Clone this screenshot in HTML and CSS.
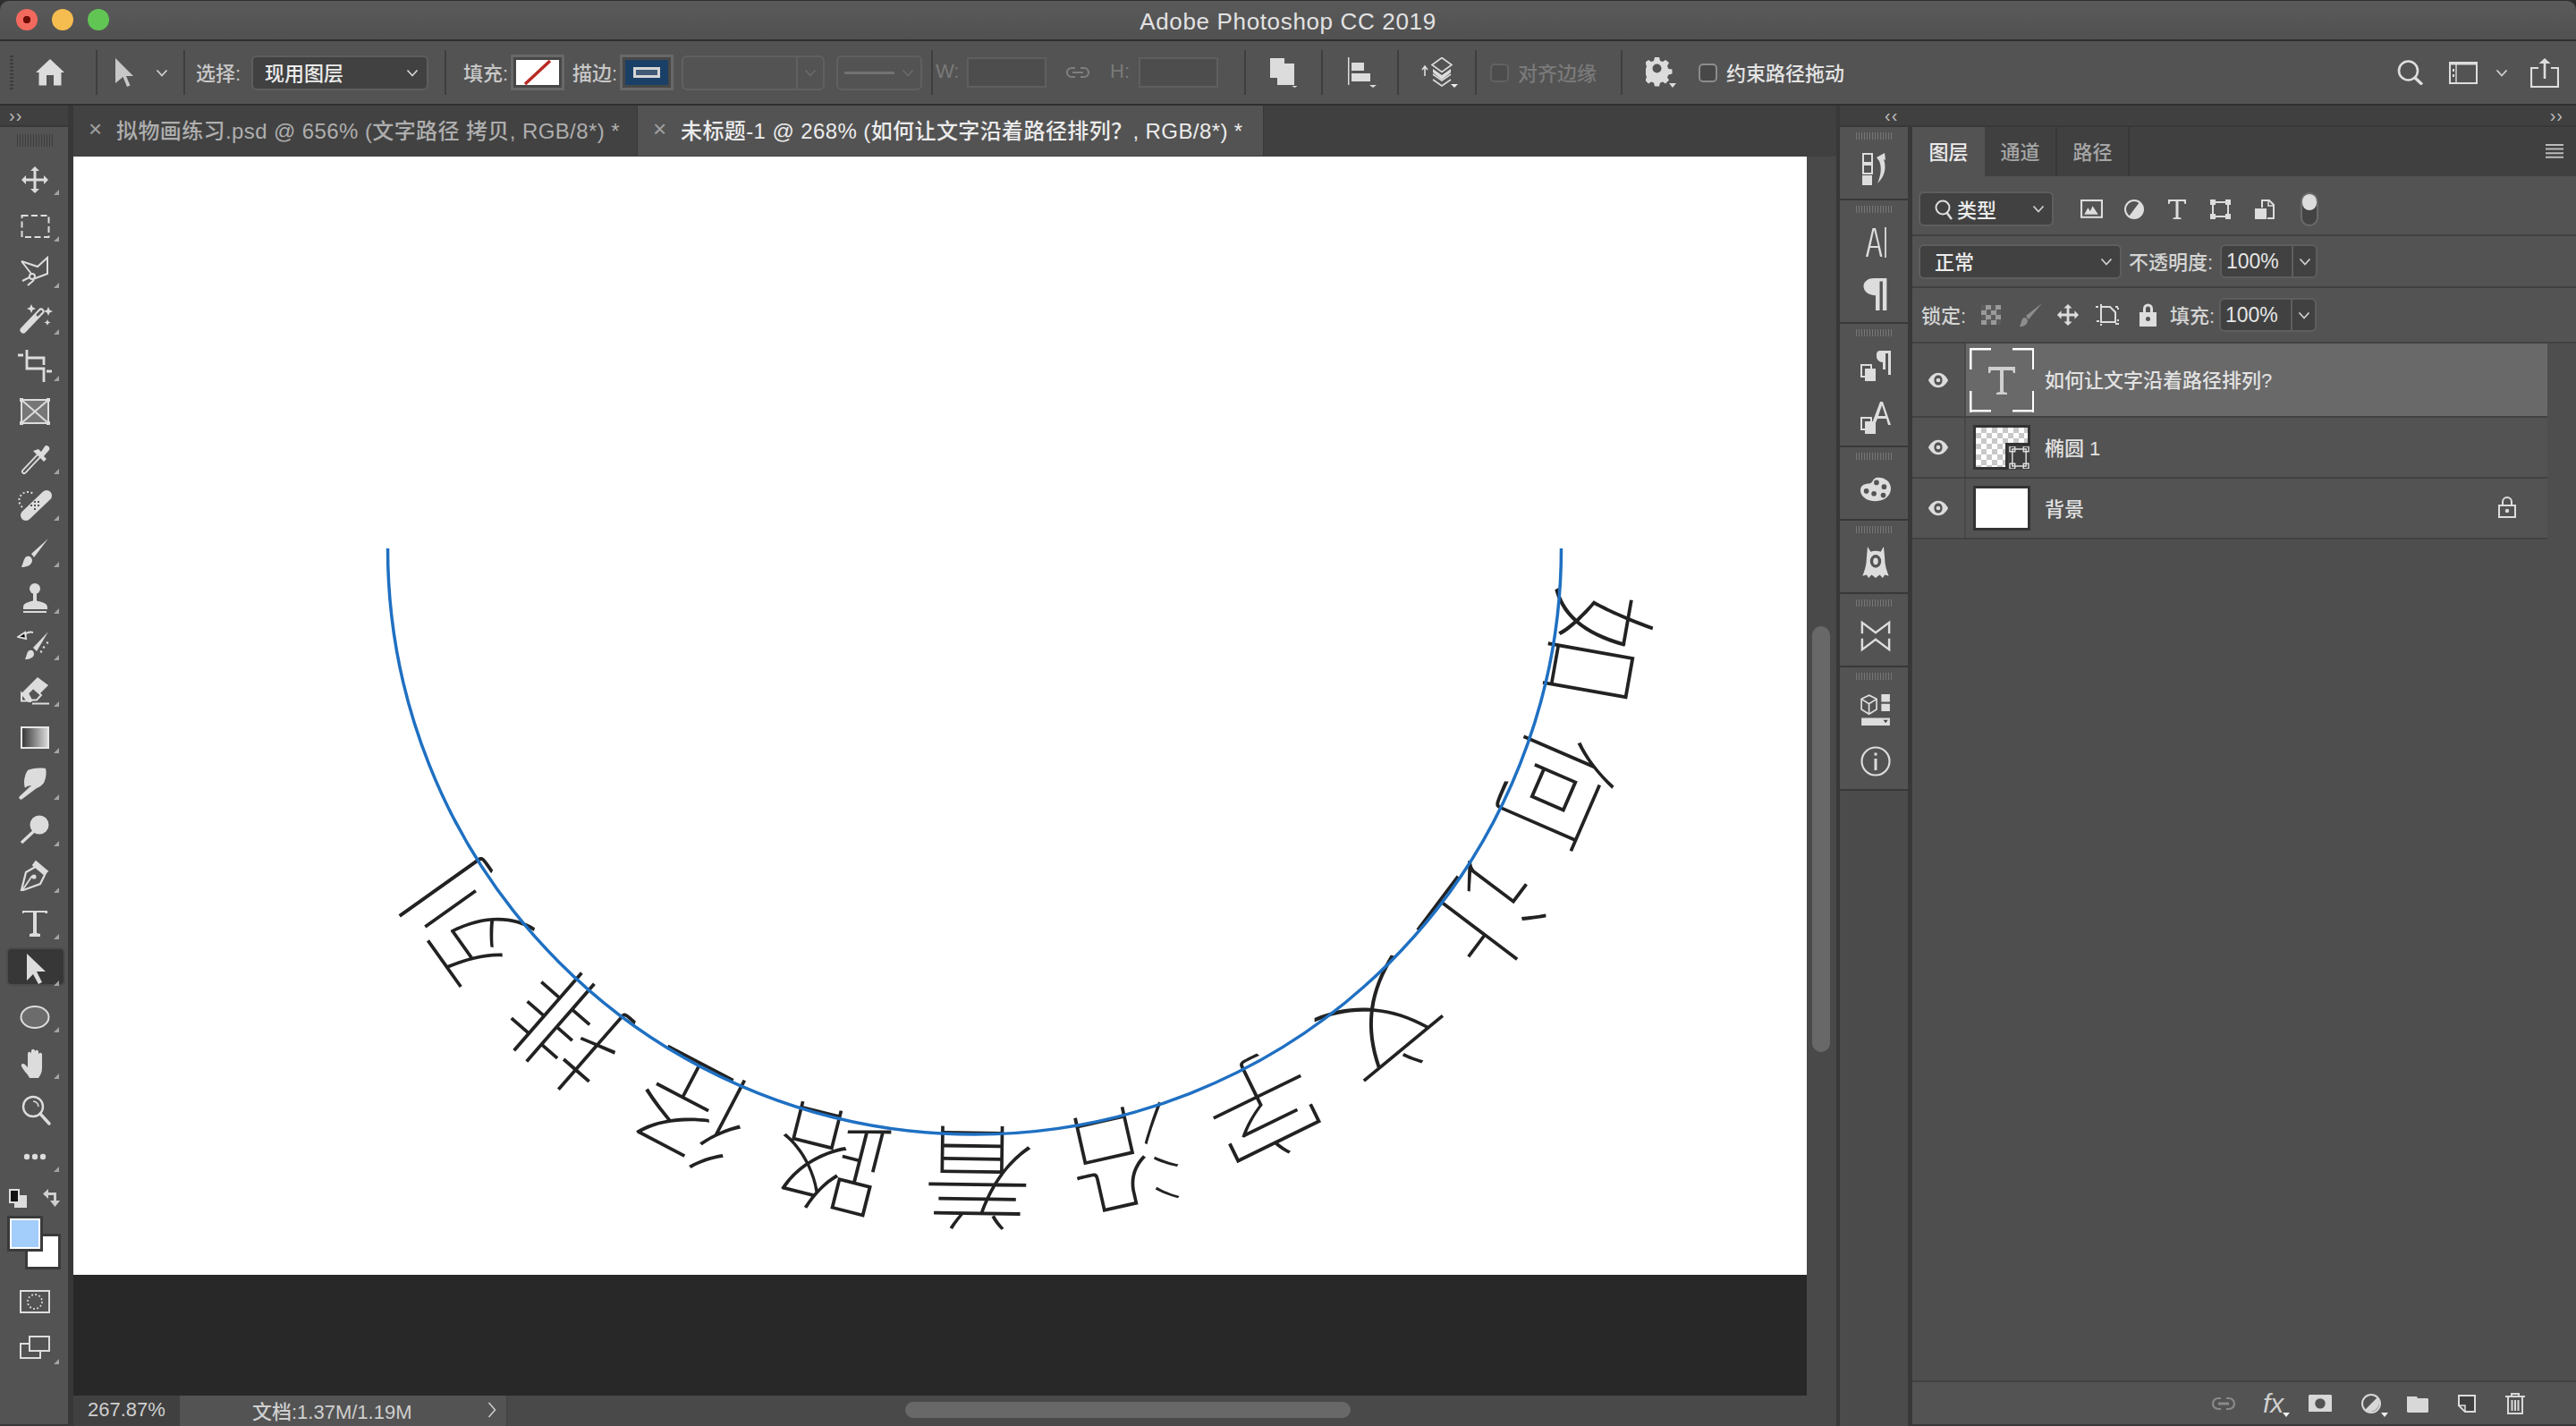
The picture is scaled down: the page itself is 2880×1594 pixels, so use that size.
FILE: index.html
```html
<!DOCTYPE html>
<html lang="zh-CN">
<head>
<meta charset="utf-8">
<title>Adobe Photoshop CC 2019</title>
<link rel="stylesheet" href="styles.css">
</head>
<body>
<svg class="defs" aria-hidden="true">
  <symbol id="chev" viewBox="0 0 14 9"><path d="M1.5 1.5L7 7.5l5.5-6" fill="none" stroke="currentColor" stroke-width="1.8"/></symbol>
  <symbol id="tri" viewBox="0 0 8 5"><path d="M0 0h8L4 5z" fill="currentColor"/></symbol>
  <symbol id="eye" viewBox="0 0 26 20"><path fill-rule="evenodd" d="M13 1C7 1 3 6 1 10c2 4 6 9 12 9s10-5 12-9c-2-4-6-9-12-9zm0 3c3.400 0 5 3 5 6s-1.600 6-5 6-5-3-5-6 1.600-6 5-6z" fill="currentColor"/><circle cx="13" cy="10" r="2.500" fill="currentColor"/></symbol>
</svg>

<header class="titlebar">
  <div class="lights"><span class="light red"></span><span class="light yellow"></span><span class="light green"></span></div>
  <div class="title">Adobe Photoshop CC 2019</div>
  <div></div>
</header>

<div class="options">
  <span class="grip-v ml11"></span>
  <svg class="ico w32 ml25" viewBox="0 0 32 30"><path d="M16 0l16 15h-3.500v14.500H20V18h-8v11.500H3.500V15H0z"/></svg>
  <span class="sep ml35"></span>
  <svg class="ico w22 ml19 soft" viewBox="0 0 22 32"><path d="M1 0l20 20h-8l4.500 10.500-3.500 1.500-4.500-11L1 28z"/></svg>
  <svg class="chev ml24"><use href="#chev"/></svg>
  <span class="sep ml17"></span>
  <span class="lbl w50 ml12">选择:</span>
  <div class="select sel-main ml12"><span>现用图层</span><svg class="chev"><use href="#chev"/></svg></div>
  <span class="sep ml18"></span>
  <span class="lbl w50 ml19">填充:</span>
  <span class="swatch ml3"><svg class="swatch-in" viewBox="0 0 48 28"><rect width="48" height="28" fill="#fff"/><path d="M38 1L10 27" stroke="#b92b25" stroke-width="3.500"/></svg></span>
  <span class="lbl w50 ml9">描边:</span>
  <span class="swatch ml3"><svg class="swatch-in" viewBox="0 0 48 28"><rect width="48" height="28" fill="#1b4068"/><rect x="10.500" y="9.500" width="27" height="9" fill="#425a78" stroke="#d6d6d6" stroke-width="3"/></svg></span>
  <div class="select off w160 ml9"><span class="flex1"></span><span class="vdiv"></span><svg class="chev dim"><use href="#chev"/></svg></div>
  <div class="select off w96 ml13"><span class="dash"></span><svg class="chev soft"><use href="#chev"/></svg></div>
  <span class="sep ml10"></span>
  <span class="lbl dim w24 ml3">W:</span>
  <span class="field ml11"></span>
  <svg class="ico-s w30 ml20" viewBox="0 0 30 16"><path d="M12 3H8a5 5 0 0 0 0 10h4M18 3h4a5 5 0 0 1 0 10h-4M9 8h12" fill="none" stroke="#7f7f7f" stroke-width="2.200"/></svg>
  <span class="lbl dim w22 ml21">H:</span>
  <span class="field ml10"></span>
  <span class="sep ml29"></span>
  <svg class="ico w30 ml27" viewBox="0 0 30 34"><path d="M0 1h16v22H0z"/><path d="M8 7h19v24H8z" fill="#d0d0d0"/><path d="M24 32h7l-3.500 2z" fill="#eee"/></svg>
  <span class="sep ml27"></span>
  <svg class="ico w34 ml28" viewBox="0 0 34 34"><path d="M0 0h1.500v31H0zM4 6h14v9H4zM4 18h21v9H4zM24 31h8l-4 3z"/></svg>
  <span class="sep ml21"></span>
  <svg class="ico-s w44 ml24" viewBox="0 0 44 34"><path d="M5 21V11M2 14l3-4 3 4" fill="none" stroke="#ddd" stroke-width="1.600"/><path d="M24 0.500l11 8-11 8-11-8z" fill="none" stroke="#ddd" stroke-width="1.600"/><path d="M14 13l10 7 10-7v4l-10 8-10-8z" fill="#ddd"/><path d="M14 19l10 7 10-7M14 25l10 7 10-7" fill="none" stroke="#ddd" stroke-width="1.600"/><path d="M34 30h8l-4 4z" fill="#eee"/></svg>
  <span class="sep ml17"></span>
  <span class="chk off-chk ml15"></span>
  <span class="lbl dim w91 ml10">对齐边缘</span>
  <span class="sep ml24"></span>
  <svg class="ico w34 ml26" viewBox="0 0 34 34"><path fill-rule="evenodd" d="M10 0h5l1 4 3 1 3-2 4 3-2 4 1.500 3 4 .500v5l-4 1-1.500 3 2 3-4 4-3-2-3 1-1 4h-5l-1-4-3-1-3 2-4-4 2-3-1-3-4-1v-5l4-.500 1-3-2-4 4-3 3 2 3-1zm2.500 7.500a5 5 0 1 0 0 10 5 5 0 0 0 0-10z"/><path d="M26 29h8l-4 5z" fill="#eee"/></svg>
  <span class="chk ml25"></span>
  <span class="lbl bright w133 ml10">约束路径拖动</span>
  <svg class="ico-s w30 auto" viewBox="0 0 30 28"><circle cx="12.500" cy="12" r="10.500" fill="none" stroke="#ddd" stroke-width="2.600"/><path d="M19 19l9 8.500" stroke="#ddd" stroke-width="3.400"/></svg>
  <svg class="ico-s w32 ml28" viewBox="0 0 32 26"><rect x="1" y="2" width="30" height="23" fill="none" stroke="#ddd" stroke-width="2"/><path d="M1 3h30" stroke="#ddd" stroke-width="3"/><path d="M8 3v22" stroke="#ddd" stroke-width="1.400"/><path d="M4 9h2v3H4zM4 15h2v3H4z" fill="#ddd"/></svg>
  <svg class="chev ml20"><use href="#chev"/></svg>
  <svg class="ico-s w32 ml25" viewBox="0 0 32 33"><path d="M9 11H1v21h30V11h-8" fill="none" stroke="#ddd" stroke-width="2.200"/><path d="M14.700 23V6H9.500L16 0l6.500 6h-5.200v17z" fill="#ddd"/></svg>
</div>

<main class="workspace">
  <aside class="left">
    <div class="strip"><span class="arrows">››</span></div>
    <div class="toolbar">
      <div class="grip-h"></div>
      <div class="tool more"><svg viewBox="-20 -20 40 40"><path d="M0-15l5 5H1.500v8.500H10V-5l5 5-5 5V1.500H1.500V10H5l-5 5-5-5h3.500V1.500H-10V5l-5-5 5-5v3.500h8.500V-10H-5z"/></svg></div>
      <div class="tool more"><svg viewBox="-20 -20 40 40"><rect x="-14.500" y="-12" width="30" height="24" fill="none" stroke="#ddd" stroke-width="2" stroke-dasharray="7 3.500"/></svg></div>
      <div class="tool more"><svg viewBox="-20 -20 40 40"><path d="M-15-13L3-7 14-17V1L-2 7M-15-13L-4 1M-14 9L-6 5M-8 14L-1 8" fill="none" stroke="#ddd" stroke-width="2"/><circle cx="-3" cy="4" r="3" fill="none" stroke="#ddd" stroke-width="2"/></svg></div>
      <div class="tool more shift-up"><svg viewBox="-20 -20 40 40"><path d="M-13 13L7-8" stroke="#ddd" stroke-width="7" stroke-linecap="round"/><path d="M3-4L7-8" stroke="#555" stroke-width="3" stroke-linecap="round"/><path d="M-4-16l1.500 3.500L1-11l-3.500 1.500L-4-6l-1.500-3.500L-9-11l3.500-1.500zM15-13l1.500 3.500L20-8l-3.500 1.500L15-3l-1.500-3.500L10-8l3.500-1.500zM14 1l1 2.500 2.500 1-2.500 1-1 2.500-1-2.500-2.500-1 2.500-1z"/></svg></div>
      <div class="tool more"><svg viewBox="-20 -20 40 40"><path d="M-19-12H-13M-9-18V3H10V18M-9-9H10V-1M13 6H19" fill="none" stroke="#ddd" stroke-width="2.800"/></svg></div>
      <div class="tool"><svg viewBox="-20 -20 40 40"><rect x="-15" y="-14" width="30" height="26" fill="#777" stroke="#ddd" stroke-width="2"/><path d="M-15-14l30 26M15-14l-30 26" stroke="#ddd" stroke-width="2"/><path d="M-17-16h4v4h-4zM13-16h4v4h-4zM-17 10h4v4h-4zM13 10h4v4h-4z"/></svg></div>
      <div class="tool more shift-up"><svg viewBox="-20 -20 40 40"><path d="M-12 15L5-3" fill="none" stroke="#ddd" stroke-width="6" stroke-linecap="round"/><path d="M-12 15L5-3" fill="none" stroke="#555" stroke-width="2.400" stroke-linecap="round"/><path d="M-2-8l12 12 3-3-3-3 6-7c2-3-3-7-5-4L7-7 4-10z"/></svg></div>
      <div class="tool more shift-up"><svg viewBox="-20 -20 40 40"><path d="M-10 12L13-10" stroke="#ddd" stroke-width="12" stroke-linecap="round"/><path d="M-5 0h2v2h-2zM-1-4h2v2h-2zM-1 0h2v2h-2zM-1 4h2v2h-2zM3 0h2v2H3zM3-4h2v2H3z" fill="#555"/><path d="M-14 3A8 8 0 0 1-2-12" fill="none" stroke="#ddd" stroke-width="2" stroke-dasharray="2 2.500"/></svg></div>
      <div class="tool more"><svg viewBox="-20 -20 40 40"><path d="M-15 17c6 0 11-2 12-7 0-4-3-6-6-5-3 1-4 7-6 12zM-4 2L15-15-1 6z"/></svg></div>
      <div class="tool more"><svg viewBox="-20 -20 40 40"><circle cx="0" cy="-11" r="6"/><path d="M-2-8H2V2C2 4 14 3 14 10v2h-27v-2C-13 3-2 4-2 2zM-13 14h26v2h-26z"/></svg></div>
      <div class="tool more"><svg viewBox="-20 -20 40 40"><path d="M-11 16c5 0 10-2 10-6 0-4-3-5-5-4-3 1-3 6-5 10zM-2 3L15-15 2 7z"/><path d="M-2-14c-3-1-7 0-10 3" fill="none" stroke="#ddd" stroke-width="2"/><path d="M-19-9l8-5 1 7zM9 2l2 1M6 7l2 1M13-3l2 1" stroke="#ddd" stroke-width="2"/></svg></div>
      <div class="tool more"><svg viewBox="-20 -20 40 40"><path d="M-15 2L3-16 15-7-3 11h-5z"/><path d="M-15 2l7 8.500h-7zM-15 1.800L-7 11H-4" fill="none" stroke="#ddd" stroke-width="2"/><path d="M-8 2L-2-4 7 4 2 9.500H-4z" fill="#555" stroke="#ddd" stroke-width="2"/><path d="M-3 13.500H16" stroke="#ddd" stroke-width="2"/></svg></div>
      <div class="tool more"><svg viewBox="-20 -20 40 40"><defs><linearGradient id="g1"><stop offset="0" stop-color="#333"/><stop offset="1" stop-color="#ddd"/></linearGradient></defs><rect x="-15" y="-12" width="30" height="23" fill="url(#g1)" stroke="#e6e6e6" stroke-width="2"/></svg></div>
      <div class="tool more"><svg viewBox="-20 -20 40 40"><path d="M-8-16c4-2 12-3 20-2 1 4 1 10-2 16-2 3-5 5-8 6L-14 16c-2 2-5-1-3-3L-4 1c-2 0-6 1-7 3-2-6-1-14 3-20z"/></svg></div>
      <div class="tool more"><svg viewBox="-20 -20 40 40"><circle cx="5" cy="-7" r="10.500"/><path d="M-1 0l-14 13" stroke="#ddd" stroke-width="3.400"/></svg></div>
      <div class="tool more"><svg viewBox="-20 -20 40 40"><path d="M-15 14L-10-6 4-14 12-5 6 7-13 14z" fill="none" stroke="#ddd" stroke-width="2.200"/><path d="M1-18l13 11-4 3L-2-14zM-14 14L-3-2" stroke="#ddd" stroke-width="1.800"/><path d="M1-18l13 11-4 3L-2-14z"/><circle cx="-1" cy="-1" r="2.600"/></svg></div>
      <div class="tool more"><svg viewBox="-20 -20 40 40"><path d="M-14-12v-3h28v3h-2l-1-1H2V10l4 1v3H-6v-3l4-1V-13h-10l-1 1z"/></svg></div>
      <div class="tool more is-active"><svg viewBox="-20 -20 40 40"><path d="M-10-17L11 3H1L7 15 3 17-3 6-10 13z"/></svg></div>
      <div class="tool more"><svg viewBox="-20 -20 40 40"><ellipse cx="0" cy="0" rx="15.500" ry="12" fill="#6c6c6c" stroke="#ddd" stroke-width="2"/></svg></div>
      <div class="tool more shift-right"><svg viewBox="-20 -20 40 40"><path d="M-8 16C-10 11-14 9-17 3c-1-3 2-4 4-2l3 3V-11c0-3 4-3 4 0v6V-14c0-3 4-3 4 0v9-8c0-3 4-3 4 0V-3-10c0-3 4-3 4 0V5c0 5-2 8-4 11z"/></svg></div>
      <div class="tool shift-up"><svg viewBox="-20 -20 40 40"><circle cx="-2" cy="-3" r="11" fill="none" stroke="#ddd" stroke-width="2.400"/><path d="M-2-9a6 6 0 0 1 6 6" fill="none" stroke="#ddd" stroke-width="1.600"/><path d="M6 5l10 11" stroke="#ddd" stroke-width="3.400" stroke-linecap="round"/></svg></div>
      <div class="tool more"><svg viewBox="-20 -20 40 40"><circle cx="-9" cy="0" r="3.200"/><circle cx="0" cy="0" r="3.200"/><circle cx="9" cy="0" r="3.200"/></svg></div>
      <div class="mini-colors">
        <svg class="reset" viewBox="0 0 20 21"><path d="M8 7h12v14H6V16H0z" fill="#ddd"/><path d="M0 0h12v16H0z" fill="#ddd"/><path d="M2 2h8v12H2z" fill="#111"/></svg>
        <svg class="swap" viewBox="0 0 20 21"><path d="M6 0v4h9v9h4l-5.500 7L8 13h4V7H6v4L0 5.500z"/></svg>
      </div>
      <div class="colors"><span class="bgc"></span><span class="fgc"></span></div>
      <svg class="mode-a" viewBox="0 0 34 26"><rect x="1" y="1" width="32" height="24" fill="none" stroke="#ddd" stroke-width="2"/><ellipse cx="17" cy="13" rx="8" ry="8" fill="none" stroke="#ddd" stroke-width="1.800" stroke-dasharray="1.800 2.400"/></svg>
      <div class="mode-b more-b"><svg viewBox="0 0 34 26"><rect x="1" y="9" width="22" height="16" fill="none" stroke="#ddd" stroke-width="2"/><rect x="11" y="1" width="22" height="16" fill="#535353" stroke="#ddd" stroke-width="2"/></svg></div>
    </div>
  </aside>

  <section class="center">
    <div class="tabs">
      <div class="tab tab1"><span class="x">×</span><span class="tname">拟物画练习.psd @ 656% (文字路径 拷贝, RGB/8*) *</span></div>
      <div class="tab tab2"><span class="x">×</span><span class="tname">未标题-1 @ 268% (如何让文字沿着路径排列？, RGB/8*) *</span></div>
    </div>
    <div class="stage">
      <div class="doc">
        <div class="paper">
          <svg class="art" viewBox="82 175 1938 1250">
            <defs><path id="curve" d="M1745.500 613A656 655 0 0 1 505 910"/></defs>
            <text class="art-text"><textPath href="#curve" startOffset="37">如何让文字沿着路径排列?</textPath></text>
            <path class="art-line" d="M1745.500 613A656 655 0 0 1 433.500 613"/>
          </svg>
        </div>
        <div class="pasteboard"></div>
      </div>
      <div class="vscroll"><span class="vthumb"></span></div>
    </div>
    <div class="status">
      <span class="zoom">267.87%</span>
      <span class="docinfo"><span>文档:1.37M/1.19M</span><svg class="stat-arrow" viewBox="0 0 10 18"><path d="M1.500 1l7 8-7 8" fill="none" stroke="#cfcfcf" stroke-width="1.500"/></svg></span>
      <span class="hscroll"><span class="hthumb"></span></span>
    </div>
  </section>

  <section class="right">
    <div class="strip rstrip"><span class="arrows">‹‹</span><span class="arrows">››</span></div>
    <div class="rbody">
      <div class="dock">
        <div class="dsec"><div class="dico"><svg viewBox="0 0 30 36"><path d="M1 1h10v10H1zM1 13h10v10H1z" fill="none" stroke="#ddd" stroke-width="2"/><path d="M0 25h11v11H0z" fill="#ddd"/><path d="M16 5l9-5 1 8-2-1c3 8 2 19-7 27 4-9 5-18 2-25z" fill="#ddd"/></svg></div></div>
        <div class="dsec two">
          <div class="dico"><svg viewBox="0 0 34 34"><path d="M6 33L13.500 1h3.500l7.500 32h-2.500l-2.300-10H10.800L8.500 33zM11.300 21h8.400L15.200 3z" fill="#ddd"/><path d="M28 0v34" stroke="#ddd" stroke-width="1.800"/></svg></div>
          <div class="dico"><svg viewBox="0 0 24 32"><path d="M10 0H23V32H19V3H16V32H12V17C5 17 0 13 0 8S5 0 10 0z" fill="#ddd"/></svg></div>
        </div>
        <div class="dsec two">
          <div class="dico"><svg viewBox="0 0 34 34"><path d="M22 0h12v27h-3V3h-3v18h-3V13c-4 0-7-3-7-6.500S18 0 22 0z" fill="#ddd"/><rect x="1" y="16" width="11" height="13" fill="#535353" stroke="#ddd" stroke-width="2"/><path d="M5 20h12v14H5z" fill="#ddd"/></svg></div>
          <div class="dico"><svg viewBox="0 0 34 36"><path d="M13 24L22 0h3l9 26h-3l-2-7H19l-3 7zM20 16h8l-4-12z" fill="#ddd"/><rect x="1" y="18" width="11" height="13" fill="#535353" stroke="#ddd" stroke-width="2"/><path d="M5 22h12v14H5z" fill="#ddd"/></svg></div>
        </div>
        <div class="dsec"><div class="dico"><svg viewBox="0 0 36 28"><path fill-rule="evenodd" d="M21 0c8 0 15 5 15 13s-7 15-18 15S0 22 0 15 7 7 11 7c4 0 3-7 10-7zM19 3a3 3 0 1 0 0 6 3 3 0 0 0 0-6zM28 8a3 3 0 1 0 0 6 3 3 0 0 0 0-6zM7 13a3 3 0 1 0 0 6 3 3 0 0 0 0-6zM16 16a3 3 0 1 0 0 6 3 3 0 0 0 0-6zM27 18a3 3 0 1 0 0 6 3 3 0 0 0 0-6z" fill="#ddd"/></svg></div></div>
        <div class="dsec"><div class="dico"><svg viewBox="0 0 30 32"><path fill-rule="evenodd" d="M7 0l3 5c3-1 7-1 10 0l3-5 1 11c0 7 2 13 4 18l-4-1-2 3-3-3-4 3-4-3-3 3-2-3-4 1c2-5 4-11 4-18zM15 8a5.500 6.500 0 1 0 0 13 5.500 6.500 0 0 0 0-13zM15 11a2.500 3.500 0 1 1 0 7 2.500 3.500 0 0 1 0-7z" fill="#ddd"/></svg></div></div>
        <div class="dsec"><div class="dico"><svg viewBox="0 0 36 36"><path d="M2 15V2L18 14 34 2V15M2 21V34L18 22 34 34V21" fill="none" stroke="#ddd" stroke-width="2.600"/></svg></div></div>
        <div class="dsec two">
          <div class="dico"><svg viewBox="0 0 32 34"><path d="M9 1l9 4v12l-9 5-9-5V5z" fill="#535353"/><path d="M9 2l8 4v11l-8 5-8-5V6zM1 6l8 5 8-5M9 11v11" fill="none" stroke="#ddd" stroke-width="1.600"/><path d="M22 1h9v8h-9zM22 11h9v8h-9zM1 26h30v8H1z" fill="#ddd"/><path d="M24 28h5l-2.500 3.500z" fill="#444"/></svg></div>
          <div class="dico"><svg viewBox="0 0 34 34"><circle cx="17" cy="17" r="15.500" fill="none" stroke="#ddd" stroke-width="2.200"/><path d="M15.500 14h3v13h-3zM15.500 7.500h3v3h-3z" fill="#ddd"/></svg></div>
        </div>
      </div>
      <div class="panel">
        <div class="ptabs">
          <span class="ptab on">图层</span><span class="ptab">通道</span><span class="ptab">路径</span>
          <svg class="pmenu" viewBox="0 0 20 16"><path d="M0 0h20v2H0zM0 4.600h20v2H0zM0 9.200h20v2H0zM0 13.800h20v2H0z" fill="#bbb"/></svg>
        </div>
        <div class="prow filter">
          <div class="select s-filter">
            <svg class="qmark" viewBox="0 0 20 24"><circle cx="9" cy="10" r="7.500" fill="none" stroke="#ddd" stroke-width="2"/><path d="M13 15l6 8" stroke="#ddd" stroke-width="2.600"/></svg>
            <span class="stext">类型</span>
            <svg class="chev auto"><use href="#chev"/></svg>
          </div>
          <svg class="fi w25 ml30" viewBox="0 0 24 20"><rect x="1" y="1" width="22" height="18" fill="none" stroke="#ddd" stroke-width="2"/><path d="M4 16l4-7 2.500 3.500L13 7l6 9z" fill="#ddd"/></svg>
          <svg class="fi w22 ml24" viewBox="0 0 22 22"><circle cx="11" cy="11" r="10" fill="none" stroke="#ddd" stroke-width="2"/><path d="M17 3A10 10 0 0 1 5 19z" fill="#ddd"/></svg>
          <svg class="fi w20 ml27" viewBox="0 0 20 22"><path d="M0 5V0h20v5h-1.500l-1-3H11.500v18l3 .500V22h-9v-1.500l3-.500V2H2.500l-1 3z" fill="#ddd"/></svg>
          <svg class="fi w23 ml27" viewBox="0 0 23 22"><path d="M3 3h17v16H3z" fill="none" stroke="#ddd" stroke-width="2"/><path d="M0 0h6v6H0zM17 0h6v6h-6zM0 16h6v6H0zM17 16h6v6h-6z" fill="#ddd"/></svg>
          <svg class="fi w22 ml27" viewBox="0 0 22 22"><path d="M8 9V1h8l5 5v15h-7" fill="none" stroke="#ddd" stroke-width="2"/><path d="M15 1v6h6" fill="none" stroke="#ddd" stroke-width="1.500"/><path d="M0 10h13v12H0z" fill="#ddd"/></svg>
          <span class="toggle ml29"></span>
        </div>
        <div class="prow blend">
          <div class="select s-blend"><span>正常</span><svg class="chev auto"><use href="#chev"/></svg></div>
          <span class="plbl w100">不透明度:</span>
          <div class="numbox"><span class="num">100%</span><svg class="chev"><use href="#chev"/></svg></div>
        </div>
        <div class="prow lock">
          <span class="plbl w52">锁定:</span>
          <span class="checker-ico ml15"></span>
          <svg class="fi w25 ml21" viewBox="0 0 25 26"><path d="M0 26c5 0 8-2 9-6 0-3-2-4-4-4-3 1-3 6-5 10zM7 14L25 0 10 18z" fill="#8d8d8d"/></svg>
          <svg class="fi w26 ml16" viewBox="-14 -14 28 28"><path d="M0-13l5 5H1.500v6.500H8V-5l5 5-5 5V1.500H1.500V8H5l-5 5-5-5h3.500V1.500H-8V5l-5-5 5-5v3.500h6.500V-8H-5z" fill="#ddd"/></svg>
          <svg class="fi w28 ml18" viewBox="0 0 28 24"><path d="M6 3h10l6 6v11H6z" fill="none" stroke="#ddd" stroke-width="2"/><path d="M0 3h3M6 0v2M25 17v2M22 22h4M1 19h3M6 22v2M25 4v2M22 3h3" stroke="#ddd" stroke-width="2"/></svg>
          <svg class="fi w21 ml20" viewBox="0 0 21 26"><path fill-rule="evenodd" d="M5 10V6a5.500 5.500 0 0 1 11 0v4h4v16H1V10zM8 10h5V6a2.500 2.500 0 0 0-5 0zM10.500 15a2.500 2.500 0 1 0 0 5 2.500 2.500 0 0 0 0-5z" fill="#ddd"/></svg>
          <span class="plbl w52 ml14">填充:</span>
          <div class="numbox slim"><span class="num">100%</span><svg class="chev"><use href="#chev"/></svg></div>
        </div>
        <div class="layers">
          <div class="layer l-active">
            <span class="eye"><svg><use href="#eye"/></svg></span>
            <span class="tthumb"><svg viewBox="0 0 34 34"><path d="M2 9V2h30v7h-2l-1-3H19v24l4 1v2H11v-2l4-1V6H5L4 9z" fill="#cfcfcf"/></svg></span>
            <span class="lname">如何让文字沿着路径排列?</span>
          </div>
          <div class="layer">
            <span class="eye"><svg><use href="#eye"/></svg></span>
            <span class="thumb checker"><svg class="vmask" viewBox="0 0 24 26"><path d="M4 3h16v20H4z" fill="none" stroke="#ddd" stroke-width="1.500"/><path d="M1 0h6v6H1zM17 0h6v6h-6zM1 20h6v6H1zM17 20h6v6h-6z" fill="none" stroke="#ddd" stroke-width="1.500"/></svg></span>
            <span class="lname">椭圆 1</span>
          </div>
          <div class="layer">
            <span class="eye"><svg><use href="#eye"/></svg></span>
            <span class="thumb white"></span>
            <span class="lname">背景</span>
            <svg class="llock" viewBox="0 0 22 24"><path d="M2 10h18v13H2zM6 10V6a5 5 0 0 1 10 0v4" fill="none" stroke="#ddd" stroke-width="2"/><circle cx="11" cy="16" r="2.200" fill="#ddd"/></svg>
          </div>
        </div>
        <div class="pfoot">
          <svg class="fo w28" viewBox="0 0 28 16"><path d="M11 2H8a6 6 0 0 0 0 12h3M17 2h3a6 6 0 0 1 0 12h-3" fill="none" stroke="#8a8a8a" stroke-width="2.200"/><path d="M8 8h12" stroke="#8a8a8a" stroke-width="3"/></svg>
          <span class="fx ml30">fx</span>
          <svg class="fo-tri"><use href="#tri"/></svg>
          <svg class="fo w26 ml21" viewBox="0 0 25 19"><path fill-rule="evenodd" d="M1 0h23l1 1v17l-1 1H1l-1-1V1zM12.500 4a5.500 5.500 0 1 0 0 11 5.500 5.500 0 0 0 0-11z" fill="#d8d8d8"/></svg>
          <svg class="fo w22 ml33" viewBox="0 0 22 22"><circle cx="11" cy="11" r="10" fill="none" stroke="#d8d8d8" stroke-width="2"/><path d="M18 4A10 10 0 0 1 4 18z" fill="#d8d8d8"/></svg>
          <svg class="fo-tri"><use href="#tri"/></svg>
          <svg class="fo w24 ml21" viewBox="0 0 24 20"><path d="M0 2h11l1 2h11l1 1v14l-1 1H1l-1-1z" fill="#d8d8d8"/></svg>
          <svg class="fo w20 ml33" viewBox="0 0 20 20"><path d="M1 1h18v18H8L1 12z" fill="#3f3f3f" stroke="#ddd" stroke-width="2"/><path d="M1 12h7v7z" fill="#535353" stroke="#ddd" stroke-width="1.500"/></svg>
          <svg class="fo w22 ml33" viewBox="0 0 22 24"><path d="M0 4h22M7 4V1h8v3M3 4v19h16V4M7.500 8v12M11 8v12M14.500 8v12" fill="none" stroke="#d8d8d8" stroke-width="2"/></svg>
        </div>
      </div>
    </div>
  </section>
</main>
</body>
</html>
```
FILE: styles.css
```css
*{box-sizing:border-box}
html,body{margin:0;padding:0}
body{width:2880px;height:1594px;overflow:hidden;background:#2f2f2f;color:#d8d8d8;font-family:"Liberation Sans","Noto Sans CJK SC",sans-serif;font-size:22px;font-weight:500;display:flex;flex-direction:column}
.defs{position:absolute;width:0;height:0}
svg{display:block;flex:none}

/* title bar */
.titlebar{flex:none;margin-top:1px;border-radius:10px 10px 0 0;background:linear-gradient(#5a5a5a,#515151);display:grid;grid-template-columns:1fr auto 1fr;align-items:center;margin-bottom:2px;height:43px}
.lights{display:flex;gap:16px;padding-left:18px;margin-top:-2px}
.light{width:24px;height:24px;border-radius:50%;display:block}
.red{background:radial-gradient(circle,#6d0b05 0 4px,#f3695d 4.500px)}
.yellow{background:#f5bd4f}
.green{background:#61c554}
.title{font-size:26px;color:#e2e2e2;letter-spacing:.65px;padding-top:3px}

/* options bar */
.options{flex:none;height:70px;background:#535353;display:flex;align-items:center;margin-bottom:2px;padding-right:19px;color:#d8d8d8}
.grip-v{width:4px;height:38px;background:repeating-linear-gradient(#3d3d3d 0 2px,transparent 2px 4px)}
.sep{width:2px;height:50px;background:#3e3e3e;flex:none}
.ico path{fill:#dcdcdc}
.soft path{fill:#c8c8c8}
.chev{width:14px;height:9px;color:#d0d0d0;flex:none}
.chev.dim{color:#6a6a6a}
.chev.soft{color:#6a6a6a}
.lbl{white-space:nowrap;flex:none;color:#c8c8c8;padding-bottom:3px}
.lbl.dim{color:#7a7a7a}
.lbl.bright{color:#e4e4e4}
.select{height:39px;background:#414141;border:2px solid #5e5e5e;border-radius:6px;display:flex;align-items:center;justify-content:space-between;flex:none;color:#ececec}
.select>span{padding-bottom:2px}
.sel-main{width:198px;padding:0 9px 0 13px}
.select.off{background:transparent;padding-right:7px;border-color:#606060}
.select .flex1{flex:1}
.select .vdiv{width:2px;height:100%;background:#606060;margin-right:7px;padding:0}
.select .dash{width:56px;height:3px;background:#727272;margin-left:7px;padding:0}
.swatch{width:60px;height:40px;border:3px solid #686868;padding:3px;flex:none;background:#474747}
.swatch-in{width:48px;height:28px}
.field{width:89px;height:34px;border:2px solid #5f5f5f;background:#4d4d4d;flex:none}
.chk{width:21px;height:21px;border:2px solid #8c8c8c;border-radius:5px;flex:none;background:#484848}
.off-chk{border-color:#626262;background:#4c4c4c}
.auto{margin-left:auto}

/* generic widths and spacing */
.w20{width:20px}.w21{width:21px}.w22{width:22px}.w23{width:23px}.w24{width:24px}.w25{width:25px}.w26{width:26px}.w28{width:28px}.w30{width:30px}.w32{width:32px}.w34{width:34px}.w44{width:44px}.w50{width:50px}.w52{width:52px}.w91{width:91px}.w96{width:96px}.w100{width:100px}.w133{width:133px}.w160{width:160px}
.ml3{margin-left:3px}.ml9{margin-left:9px}.ml10{margin-left:10px}.ml11{margin-left:11px}.ml12{margin-left:12px}.ml13{margin-left:13px}.ml14{margin-left:14px}.ml15{margin-left:15px}.ml16{margin-left:16px}.ml17{margin-left:17px}.ml18{margin-left:18px}.ml19{margin-left:19px}.ml20{margin-left:20px}.ml21{margin-left:21px}.ml24{margin-left:24px}.ml25{margin-left:25px}.ml26{margin-left:26px}.ml27{margin-left:27px}.ml28{margin-left:28px}.ml29{margin-left:29px}.ml30{margin-left:30px}.ml33{margin-left:33px}.ml35{margin-left:35px}

/* workspace */
.workspace{flex:1;display:flex;min-height:0;background:#383838}
.left{width:76px;flex:none;display:flex;flex-direction:column;margin-right:6px}
.strip{height:22px;background:#404040;flex:none;margin-bottom:2px;font-size:20px;color:#bcbcbc;display:flex;align-items:center}
.arrows{letter-spacing:1px;line-height:18px;padding-left:10px}
.toolbar{flex:1;background:#535353;display:flex;flex-direction:column;align-items:stretch;margin-bottom:2px;padding-left:2px}
.grip-h{height:33px;flex:none;background:repeating-linear-gradient(90deg,#3d3d3d 0 1px,transparent 1px 3px) center 8px/40px 14px no-repeat}
.tool{height:52px;flex:none;display:flex;align-items:center;justify-content:center;position:relative}
.tool svg{width:40px;height:40px}
.tool svg>path:not([fill]):not([stroke]),.tool svg circle:not([fill]){fill:#dcdcdc}
.shift-up svg{margin-top:-3px}
.shift-right svg{margin-left:4px}
.tool.more::after{content:"";position:absolute;right:10px;bottom:9px;border-left:6px solid transparent;border-bottom:6px solid #a4a4a4}
.is-active::before{content:"";position:absolute;left:5px;right:3px;top:0;bottom:9px;background:#373737;border:2px solid #4b4b4b;border-radius:6px}
.is-active svg{position:relative;top:-2px;margin-left:2px}
.mini-colors{height:22px;margin-top:10px;padding:0 8px;display:flex;justify-content:space-between}
.reset{width:20px;height:21px}
.swap{width:20px;height:21px}
.swap path{fill:#cfcfcf}
.colors{height:62px;margin:8px 0 0 6px;position:relative;flex:none}
.fgc,.bgc{position:absolute;width:40px;height:40px;display:block;border:3px solid #3a3a3a}
.fgc{left:0;top:0;background:#a3cdfa;box-shadow:inset 0 0 0 2px #fff}
.bgc{left:20px;top:20px;background:#fff}
.mode-a{width:34px;height:26px;margin:21px 0 0 20px}
.mode-b{width:34px;height:26px;margin:25px 0 0 20px;position:relative}
.mode-b svg{width:34px;height:26px}
.more-b::after{content:"";position:absolute;right:-10px;bottom:-6px;border-left:6px solid transparent;border-bottom:6px solid #a4a4a4}

/* centre */
.center{width:1971px;flex:none;display:flex;flex-direction:column;margin-right:4px}
.tabs{height:57px;flex:none;background:#404040;display:flex;padding-bottom:1px}
.tab{height:56px;display:flex;align-items:center;font-size:24px;flex:none;border-right:1px solid #383838;white-space:nowrap;letter-spacing:.4px}
.tab1{width:631px;background:#424242;color:#aeaeae}
.tab2{width:700px;background:#535353;color:#ececec}
.tname{padding-bottom:3px}
.x{width:26px;margin-left:17px;margin-right:5px;font-size:26px;color:#a0a0a0;padding-bottom:3px}
.stage{flex:1;display:flex;min-height:0}
.doc{width:1938px;flex:none;display:flex;flex-direction:column}
.paper{height:1250px;background:#fff;flex:none}
.art{width:1938px;height:1250px}
.art-line{fill:none;stroke:#1f70c2;stroke-width:3.500}
.art-text{font-family:"Noto Sans CJK SC",sans-serif;font-size:128px;font-weight:100;letter-spacing:26px;fill:#222}
.pasteboard{flex:1;background:#282828}
.vscroll{flex:1;background:#494949;padding:525px 7px 0 6px}
.vthumb{display:block;height:476px;background:#686868;border-radius:10px}
.status{height:34px;flex:none;display:flex;background:#3a3a3a;color:#cfcfcf;font-size:22px}
.zoom{width:119px;background:#404040;padding:0 0 2px 16px;display:flex;align-items:center}
.docinfo{width:367px;background:#535353;display:flex;align-items:center;padding:0 0 2px 81px;border-right:2px solid #444}
.stat-arrow{width:10px;height:18px;margin-left:auto;margin-right:11px}
.hscroll{flex:1;background:#494949;padding:7px 0 0 444px}
.hthumb{display:block;width:498px;height:18px;background:#686868;border-radius:9px}

/* right column */
.right{flex:1;display:flex;flex-direction:column;min-width:0}
.rstrip{justify-content:space-between;padding:0 14px 0 50px}
.rstrip .arrows{padding:0}
.rbody{flex:1;display:flex;min-height:0}
.dock{width:76px;flex:none;margin-right:5px;display:flex;flex-direction:column;gap:2px;background:#383838}
.dsec{height:80px;flex:none;background:#535353;display:flex;flex-direction:column;align-items:center}
.dsec.two{height:136px}
.dsec::before{content:"";display:block;width:40px;height:8px;margin:6px 0 2px;background:repeating-linear-gradient(90deg,#777 0 1px,transparent 1px 3px);flex:none}
.dock::after{content:"";flex:1;background:#4b4b4b}
.dico{height:58px;display:flex;align-items:center;justify-content:center;flex:none;padding:3px 0 0 3px}
.dico svg{width:34px;height:36px}

/* panel */
.panel{flex:1;display:flex;flex-direction:column;background:#535353;min-width:0;margin-bottom:2px}
.ptabs{height:55px;flex:none;background:#404040;display:flex;position:relative;align-items:stretch}
.ptab{width:81px;display:flex;align-items:center;justify-content:center;color:#a6a6a6;border-right:2px solid #383838;flex:none;padding-bottom:3px}
.ptab.on{background:#535353;color:#ececec;border-right:0}
.pmenu{width:20px;height:16px;position:absolute;right:14px;top:19px}
.prow{flex:none;display:flex;align-items:center;padding-left:7px;border-bottom:2px solid #414141}
.filter{height:67px;padding-top:8px}
.blend{height:58px}
.lock{height:60px;padding-left:10px;border-bottom:0}
.s-filter{width:151px;padding:0 8px 0 16px;justify-content:flex-start}
.qmark{width:20px;height:24px}
.select .stext{margin-left:5px}
.fi{height:auto}
.toggle{width:20px;height:38px;border:2px solid #6a6a6a;border-radius:10px;background:#434343;position:relative;display:block;flex:none}
.toggle::before{content:"";position:absolute;left:0;top:0;width:16px;height:18px;border-radius:8px;background:#dcdcdc}
.s-blend{width:227px;padding:0 8px 0 16px}
.plbl{white-space:nowrap;flex:none;color:#d4d4d4;margin-left:8px;padding-bottom:3px}
.w100.plbl{width:100px}
.lock .plbl{margin-left:0}
.lock .plbl.ml14{margin-left:14px}
.numbox{width:109px;height:38px;background:#414141;border:2px solid #5e5e5e;border-radius:6px;display:flex;align-items:center;flex:none}
.numbox.slim{margin-left:3px}
.blend .numbox{margin-left:2px}
.num{width:80px;padding-left:5px;height:100%;display:flex;align-items:center;border-right:2px solid #5e5e5e;color:#e6e6e6;font-size:23px;flex:none}
.numbox .chev{margin-left:6px}
.checker-ico{width:22px;height:22px;display:block;background:repeating-conic-gradient(#9a9a9a 0 25%,#5c5c5c 0 50%) 0 0/11px 11px;flex:none}
.layers{flex:1;background:#4e4e4e;border-top:2px solid #424242;padding-right:32px;min-height:0}
.layer{height:68px;background:#535353;display:flex;align-items:center;border-bottom:2px solid #424242;color:#e2e2e2;position:relative}
.lname{padding-bottom:3px}
.l-active{height:83px;background:#696969}
.eye{width:60px;flex:none;height:100%;display:flex;align-items:center;justify-content:center;border-right:2px solid #484848;background:#535353;color:#dcdcdc}
.eye svg{width:24px;height:20px}
.tthumb{width:72px;height:72px;margin-left:4px;flex:none;display:flex;align-items:center;justify-content:center;background:linear-gradient(#fff,#fff) 0 0/24px 2.500px no-repeat,linear-gradient(#fff,#fff) 0 0/2.500px 24px no-repeat,linear-gradient(#fff,#fff) 100% 0/24px 2.500px no-repeat,linear-gradient(#fff,#fff) 100% 0/2.500px 24px no-repeat,linear-gradient(#fff,#fff) 0 100%/24px 2.500px no-repeat,linear-gradient(#fff,#fff) 0 100%/2.500px 24px no-repeat,linear-gradient(#fff,#fff) 100% 100%/24px 2.500px no-repeat,linear-gradient(#fff,#fff) 100% 100%/2.500px 24px no-repeat}
.tthumb svg{width:34px;height:34px}
.thumb{width:64px;height:50px;margin-left:8px;margin-right:16px;border:3px solid #333;flex:none;position:relative;display:block}
.white{background:#fff}
.checker{background:repeating-conic-gradient(#c8c8c8 0 25%,#fff 0 50%) 0 0/12px 12px}
.vmask{position:absolute;right:-3px;bottom:-3px;width:28px;height:30px;background:#404040;border:3px solid #333;border-width:3px 0 0 3px;padding:1px}
.l-active .lname{margin-left:12px}
.llock{width:22px;height:24px;position:absolute;left:654px;top:20px}
.pfoot{height:49px;flex:none;border-top:2px solid #414141;display:flex;align-items:center;padding-left:334px;position:relative}
.fo{height:auto}
.fx{font-family:"Liberation Sans",sans-serif;font-style:italic;font-size:30px;font-weight:400;color:#cfcfcf;width:22px;line-height:30px}
.fo-tri{width:8px;height:5px;color:#eee;align-self:flex-end;margin-bottom:8px}
.pfoot .w20{height:20px}
```
